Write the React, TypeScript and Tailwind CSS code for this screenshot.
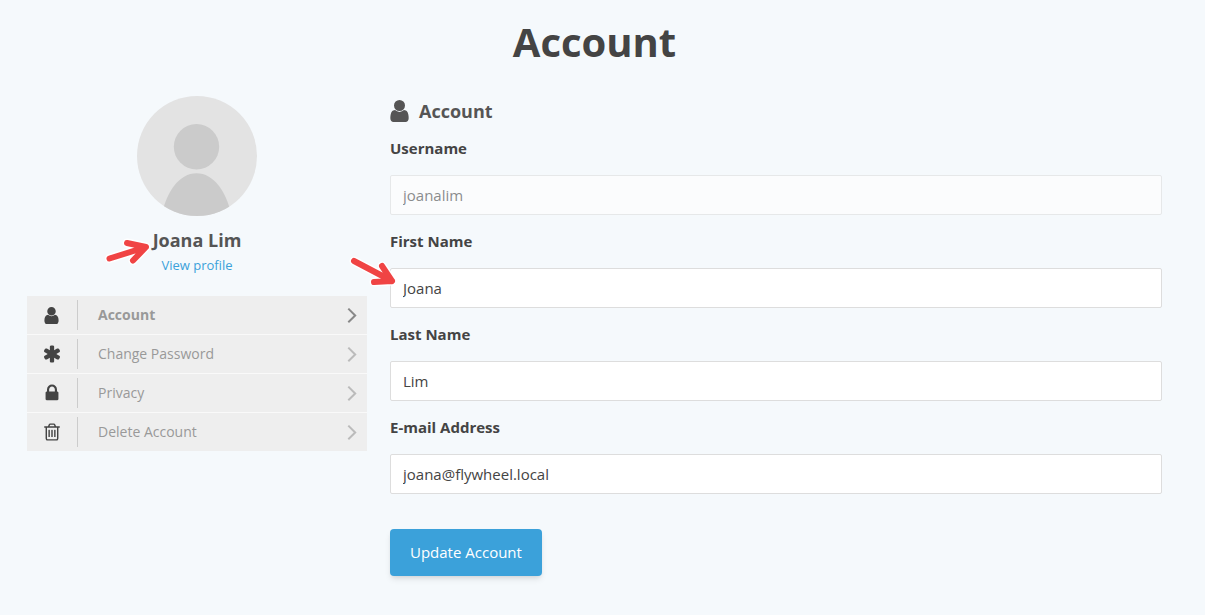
import React from "react";

type IconProps = { className?: string };

const UserIcon = ({ className }: IconProps) => (
  <svg viewBox="0 128 1280 1536" fill="currentColor" className={className} aria-hidden="true">
    <path d="M1280 1399q0 109-62.5 187t-150.5 78h-854q-88 0-150.5-78t-62.5-187q0-85 8.5-160.5t31.5-152 58.5-131 94-89 134.5-34.5q131 128 313 128t313-128q76 0 134.5 34.5t94 89 58.5 131 31.5 152 8.5 160.5zm-256-887q0 159-112.5 271.5t-271.5 112.5-271.5-112.5-112.5-271.5 112.5-271.5 271.5-112.5 271.5 112.5 112.5 271.5z" />
  </svg>
);

const AsteriskIcon = ({ className }: IconProps) => (
  <svg viewBox="0 0 1792 1792" fill="currentColor" className={className} aria-hidden="true">
    <path d="M1546 1050q46 26 59.5 77.5t-12.5 97.5l-64 110q-26 46-77.5 59.5t-97.5-12.5l-266-153v307q0 52-38 90t-90 38h-128q-52 0-90-38t-38-90v-307l-266 153q-46 26-97.5 12.5t-77.5-59.5l-64-110q-26-46-12.5-97.5t59.5-77.5l266-154-266-154q-46-26-59.5-77.5t12.5-97.5l64-110q26-46 77.5-59.5t97.5 12.5l266 153v-307q0-52 38-90t90-38h128q52 0 90 38t38 90v307l266-153q46-26 97.5-12.5t77.5 59.5l64 110q26 46 12.5 97.5t-59.5 77.5l-266 154z" />
  </svg>
);

const LockIcon = ({ className }: IconProps) => (
  <svg viewBox="0 0 1792 1792" fill="currentColor" className={className} aria-hidden="true">
    <path d="M640 768h512v-192q0-106-75-181t-181-75-181 75-75 181v192zm832 96v576q0 40-28 68t-68 28h-960q-40 0-68-28t-28-68v-576q0-40 28-68t68-28h32v-192q0-184 132-316t316-132 316 132 132 316v192h32q40 0 68 28t28 68z" />
  </svg>
);

const TrashIcon = ({ className }: IconProps) => (
  <svg viewBox="0 0 1792 1792" fill="currentColor" className={className} aria-hidden="true">
    <path d="M704 736v576q0 14-9 23t-23 9h-64q-14 0-23-9t-9-23v-576q0-14 9-23t23-9h64q14 0 23 9t9 23zm256 0v576q0 14-9 23t-23 9h-64q-14 0-23-9t-9-23v-576q0-14 9-23t23-9h64q14 0 23 9t9 23zm256 0v576q0 14-9 23t-23 9h-64q-14 0-23-9t-9-23v-576q0-14 9-23t23-9h64q14 0 23 9t9 23zm128 724v-948h-896v948q0 22 7 40.5t14.5 27 10.5 8.5h832q3 0 10.5-8.5t14.5-27 7-40.5zm-672-1076h448l-48-117q-7-9-17-11h-317q-10 2-17 11zm928 32v64q0 14-9 23t-23 9h-96v948q0 83-47 143.5t-113 60.5h-832q-66 0-113-58.5t-47-141.5v-952h-96q-14 0-23-9t-9-23v-64q0-14 9-23t23-9h309l70-167q15-37 54-63t79-26h320q40 0 79 26t54 63l70 167h309q14 0 23 9t9 23z" />
  </svg>
);

const ChevronIcon = ({ className }: IconProps) => (
  <svg viewBox="0 0 10 16" fill="none" stroke="currentColor" strokeWidth="2" className={className} aria-hidden="true">
    <path d="M1.3 1.6 8.2 8.5l-6.9 6.7" />
  </svg>
);

const Avatar = () => (
  <svg viewBox="0 0 120 120" className="size-[120px]" role="img" aria-label="Joana Lim">
    <defs>
      <clipPath id="avatar-clip">
        <circle cx="60" cy="60" r="60" />
      </clipPath>
    </defs>
    <g clipPath="url(#avatar-clip)">
      <rect width="120" height="120" fill="#e3e3e3" />
      <circle cx="59.5" cy="50.7" r="22.7" fill="#cbcbcb" />
      <path d="M24 122C29 96 42 77.2 59.5 77.2S90 96 95 122Z" fill="#cbcbcb" />
    </g>
  </svg>
);

const Arrow = ({ className, d, box }: { className: string; d: string; box: string }) => (
  <svg viewBox={box} fill="none" strokeLinecap="round" strokeLinejoin="round" className={className} aria-hidden="true">
    <path d={d} stroke="#ffffff" strokeWidth="9" />
    <path d={d} stroke="#f04444" strokeWidth="6" />
  </svg>
);

const navItems = [
  { label: "Account", Icon: UserIcon, iconClass: "h-[17px] w-[15px]", active: true },
  { label: "Change Password", Icon: AsteriskIcon, iconClass: "size-5", active: false },
  { label: "Privacy", Icon: LockIcon, iconClass: "size-5", active: false },
  { label: "Delete Account", Icon: TrashIcon, iconClass: "size-5", active: false },
];

const fields = [
  { id: "username", label: "Username", value: "joanalim", type: "text", disabled: true },
  { id: "first-name", label: "First Name", value: "Joana", type: "text", disabled: false },
  { id: "last-name", label: "Last Name", value: "Lim", type: "text", disabled: false },
  { id: "email", label: "E-mail Address", value: "joana@flywheel.local", type: "email", disabled: false },
];

export default function App() {
  return (
    <div className="min-h-screen bg-[#f5f9fc] pb-8 pl-[27px] pr-[43px] font-['Open_Sans',sans-serif] text-[#444]">
      <h1 className="pt-4 text-center text-[40px] font-bold leading-[52px]">Account</h1>

      <div className="flex items-start gap-[23px] pt-7">
        <aside className="w-[340px] shrink-0">
          <div className="flex flex-col items-center">
            <Avatar />
            <div className="relative mt-3 text-lg font-bold leading-6 text-[#555]">
              Joana Lim
              <Arrow
                className="absolute -left-12 top-2 h-[34px] w-12"
                box="0 0 48 34"
                d="M4.5 22.5 41 11M22 7 41 11 28 24.5"
              />
            </div>
            <a href="#profile" className="mt-[7px] text-[13px] leading-[13px] text-[#3ba1da]">
              View profile
            </a>
          </div>

          <nav className="mt-6 flex flex-col gap-px bg-[#f9f9f9]">
            {navItems.map(({ label, Icon, iconClass, active }) => (
              <a key={label} href="#account" className="flex h-[38px] items-center bg-[#eee] text-sm">
                <span className="flex h-[30px] w-[51px] items-center justify-center border-r border-[#ccc] pr-px text-[#444]">
                  <Icon className={iconClass} />
                </span>
                <span className={active ? "grow pl-5 font-bold text-[#999]" : "grow pl-5 text-[#999]"}>{label}</span>
                <ChevronIcon
                  className={active ? "mr-[10px] h-4 w-[10px] text-[#888]" : "mr-[10px] h-4 w-[10px] text-[#bbb]"}
                />
              </a>
            ))}
          </nav>
        </aside>

        <form className="min-w-0 grow" onSubmit={(e) => e.preventDefault()}>
          <h2 className="flex h-[30px] items-center gap-[10px] text-lg font-bold text-[#555]">
            <UserIcon className="h-[22px] w-[19px]" />
            Account
          </h2>

          <div className="mt-[9px] flex flex-col gap-[13px]">
            {fields.map((f) => (
              <div key={f.id} className="relative flex flex-col gap-[14px]">
                <label htmlFor={f.id} className="text-[15px] font-bold leading-[26px]">
                  {f.label}
                </label>
                <input
                  id={f.id}
                  type={f.type}
                  defaultValue={f.value}
                  disabled={f.disabled}
                  className="h-10 w-full rounded-[2px] border border-[#ddd] bg-white px-3 text-[15px] text-[#444] outline-none disabled:opacity-60"
                />
                {f.id === "first-name" && (
                  <Arrow
                    className="absolute -left-[42px] top-[26px] h-9 w-12"
                    box="0 0 48 36"
                    d="M6 7 44 27M34 12 44 27 26 28"
                  />
                )}
              </div>
            ))}
          </div>

          <button
            type="submit"
            className="mt-[35px] h-[47px] rounded bg-[#3ba1da] px-5 text-[15px] text-white shadow-md"
          >
            Update Account
          </button>
        </form>
      </div>
    </div>
  );
}
